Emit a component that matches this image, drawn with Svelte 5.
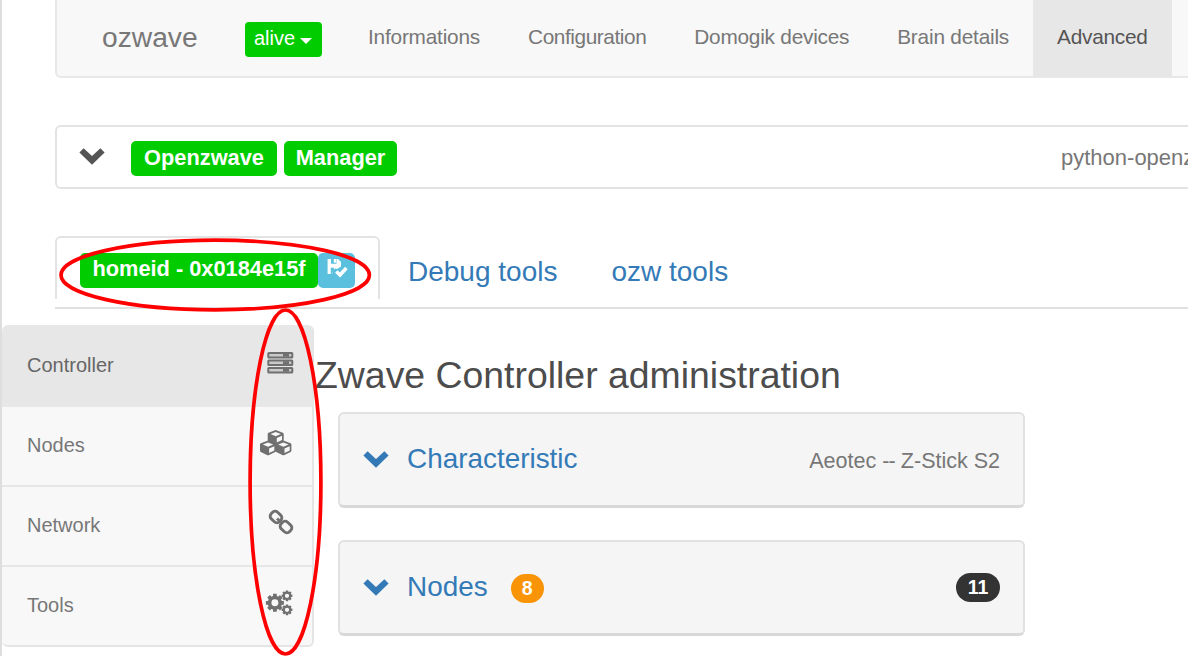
<script>
  const navItems = [
    { label: 'Informations', spacing: -0.2 },
    { label: 'Configuration', spacing: -0.42 },
    { label: 'Domogik devices', spacing: -0.23 },
    { label: 'Brain details', spacing: -0.2 },
    { label: 'Advanced', spacing: -0.25, active: true }
  ];
  const menu = ['Controller', 'Nodes', 'Network', 'Tools'];
  const teeth = [0, 45, 90, 135];
</script>

{#snippet chevron()}
  <svg class="chevron" viewBox="0 0 26 17" width="26" height="17">
    <path d="M4.6.2 13 8 21.4.2 25.6 4.4 13 16.8.4 4.4Z" fill="currentColor" />
  </svg>
{/snippet}

{#snippet gear(x, y, r, tooth, ring)}
  <g transform="translate({x} {y})" stroke="currentColor" fill="none">
    {#each teeth as angle}
      <path d="M0 {-r}V{-r * 0.6}M0 {r * 0.6}V{r}" stroke-width={tooth} transform="rotate({angle})" />
    {/each}
    <circle r={r * 0.59} stroke-width={ring} />
  </g>
{/snippet}

{#snippet cube(x, y)}
  <g transform="translate({x} {y})">
    <path d="M8 0 15.2 2.8Q16 3.2 16 4V10.3Q16 11.2 15.2 11.6L8.6 14.7Q8 15 7.4 14.7L.8 11.6Q0 11.2 0 10.3V4Q0 3.2.8 2.8Z" fill="currentColor" />
    <path d="M8 1.9 13.2 4 8 6.2 2.8 4Z" fill="#f8f8f8" />
    <path d="M9.1 8 14.3 5.8V10.1L9.1 12.6Z" fill="#f8f8f8" />
  </g>
{/snippet}

<div class="page">
  <nav class="navbar">
    <span class="brand">ozwave</span>
    <button class="alive">alive<i class="caret"></i></button>
    {#each navItems as item}
      <a class="nav-item" class:active={item.active} style="letter-spacing:{item.spacing}px">{item.label}</a>
    {/each}
  </nav>

  <section class="manager">
    {@render chevron()}
    <span class="label first">Openzwave</span>
    <span class="label second">Manager</span>
    <span class="version">python-openz</span>
  </section>

  <div class="tabs">
    <div class="tab current">
      <span class="label home">homeid - 0x0184e15f</span>
      <span class="save">
        <svg viewBox="0 0 24 20" width="24" height="20">
          <path d="M1.6 1H12L15 4V8.5L11 11 9 10.5 6.5 13.5V16H1.6Z" fill="#fff" />
          <path d="M5 1H10.5V5.8H5ZM4.8 9.8H8V12L6.5 14V16H4.8Z" fill="#5bc0de" />
          <path d="M7.8 1H10.2V4.6H7.8Z" fill="#fff" />
          <path d="M10.3 13.4 14 16.9 20.4 10" fill="none" stroke="#fff" stroke-width="3.5" />
        </svg>
      </span>
    </div>
    <a class="tab debug">Debug tools</a>
    <a class="tab ozw">ozw tools</a>
  </div>

  <div class="content">
    <aside>
      {#each menu as item, i}
        <a class="menu-item" class:selected={i === 0}>
          <span>{item}</span>
          <svg class="menu-icon" viewBox="0 0 34 30" width="34" height="30">
            {#if i === 0}
              {#each [5, 12.5, 20] as y}
                <rect x="8.3" {y} width="24" height="4.6" rx=".6" fill="#c9c9c9" stroke="currentColor" stroke-width="2" />
                <path d="M23 {y + 2.3}h6" stroke="currentColor" stroke-width="3" />
              {/each}
            {:else if i === 1}
              {@render cube(7.7, 2)}
              {@render cube(0, 12.5)}
              {@render cube(15.4, 12.5)}
            {:else if i === 2}
              <g fill="none" stroke="currentColor" stroke-width="2.9">
                <rect x="-5.8" y="-4.6" width="11.6" height="9.2" rx="3.7" transform="translate(16 9) rotate(43)" />
                <rect x="-5.8" y="-4.6" width="11.6" height="9.2" rx="3.7" transform="translate(26 19) rotate(43)" />
                <path d="m17 10.5 3.8 3.5" />
              </g>
            {:else}
              {@render gear(14.9, 14.8, 9, 3.8, 3.7)}
              {@render gear(27, 7.8, 5.4, 2.4, 2.1)}
              {@render gear(27, 21.8, 5.4, 2.4, 2.1)}
            {/if}
          </svg>
        </a>
      {/each}
    </aside>
    <main>
      <h1>Zwave Controller administration</h1>
      <section class="card">
        {@render chevron()}
        <span class="title">Characteristic</span>
        <span class="device">Aeotec <i class="dashes">--</i> Z-Stick S2</span>
      </section>
      <section class="card">
        {@render chevron()}
        <span class="title">Nodes</span>
        <span class="badge orange">8</span>
        <span class="badge dark">11</span>
      </section>
    </main>
  </div>

  <svg class="marks" viewBox="0 0 1188 656" width="1188" height="656">
    <g fill="none" stroke="#f00" stroke-width="3.7">
      <ellipse cx="215.2" cy="275" rx="154.2" ry="34.8" />
      <ellipse cx="285.5" cy="482" rx="35.4" ry="172" />
    </g>
  </svg>
</div>

<style>
  :global(body) { margin: 0; overflow: hidden; }
  .page {
    position: relative; box-sizing: border-box; width: 1188px; height: 656px; overflow: hidden;
    border-left: 2px solid #dedede; background: #fff; color: #777;
    font-family: "Liberation Sans", Arial, sans-serif;
  }
  .page * { box-sizing: border-box; }
  svg { display: block; flex: none; }
  span, a { white-space: nowrap; }
  .navbar {
    display: flex; height: 78px; margin-left: 53px; background: #f8f8f8;
    border: solid #e8e8e8; border-width: 0 0 2px 2px; border-radius: 0 0 0 6px;
  }
  .brand { width: 188px; padding-left: 45px; font-size: 28.2px; line-height: 74px; }
  .alive {
    display: flex; align-items: center; width: 77px; height: 35px; margin: 21.5px 22px 0 0; padding: 0 0 2px 9px;
    background: #0c0; border: 0; border-radius: 4px; color: #fff; font: 20px "Liberation Sans", Arial, sans-serif;
  }
  .caret { margin: 5px 0 0 5px; border: solid transparent; border-width: 6px 6px 0; border-top-color: #fff; }
  .nav-item { flex: none; padding: 0 24px; font-size: 20.8px; line-height: 74px; }
  .nav-item.active { background: #e7e7e7; color: #555; }
  .manager {
    display: flex; align-items: center; height: 64px; margin: 47px 0 0 53px; padding: 2px 0 0 22px;
    border: 2px solid #e3e3e3; border-right: 0; border-radius: 6px 0 0 6px; color: #555;
  }
  .manager .chevron { margin-top: -3px; }
  .label {
    flex: none; height: 35px; border-radius: 5px; background: #0c0; color: #fff;
    font-size: 21.8px; font-weight: bold; line-height: 33px; text-align: center;
  }
  .first { width: 146px; margin-left: 26px; }
  .second { width: 113px; margin-left: 7px; }
  .version { margin-left: 664px; font-size: 22px; color: #777; }
  .tabs { display: flex; height: 73px; margin: 47px 0 0 53px; border-bottom: 2px solid #e0e0e0; color: #337ab7; font-size: 28px; }
  .tab { flex: none; line-height: 71px; }
  .current {
    display: flex; width: 325px; height: 63px; padding: 15px 0 0 23px;
    border: 2px solid #e3e3e3; border-bottom: 0; border-radius: 6px 6px 0 0;
  }
  .current .label { line-height: 32px; }
  .home { width: 238px; }
  .save { display: flex; align-items: center; justify-content: center; width: 37px; height: 35px; padding: 0 0 5px 2px; border-radius: 5px; background: #5bc0de; }
  .debug { margin-left: 28px; }
  .ozw { margin-left: 54px; }
  .content { display: flex; padding-top: 16px; }
  aside { flex: none; width: 312px; height: 322px; border: solid #e5e5e5; border-width: 0 2px 2px 0; border-radius: 6px; background: #f8f8f8; overflow: hidden; }
  .menu-item { display: flex; justify-content: space-between; height: 80px; padding: 21px 18px 0 25px; border-bottom: 2px solid #e7e7e7; font-size: 20px; line-height: 35px; }
  .menu-item:last-child { border-bottom: 0; }
  .menu-item.selected { height: 82px; background: #e7e7e7; color: #666; padding-top: 23px; }
  .menu-icon { color: #707070; }
  main { flex: none; width: 712px; padding-top: 29px; }
  h1 { margin: 0 0 15px 1px; font-size: 37.4px; font-weight: normal; line-height: 43px; color: #4c4c4c; white-space: nowrap; }
  .card {
    display: flex; align-items: center; height: 96px; margin: 0 1px 32px 24px; padding: 0 23px;
    background: #f5f5f5; border: 2px solid #e1e1e1; border-bottom: 3px solid #d8d8d8; border-radius: 6px; color: #337ab7;
  }
  .title { margin: 0 0 1px 18px; font-size: 27.9px; }
  .device { margin: 3px 0 0 auto; font-size: 21.5px; color: #777; }
  .dashes { font-style: normal; letter-spacing: -.8px; }
  .badge { height: 29px; border-radius: 15px; color: #fff; font-size: 19.5px; font-weight: bold; line-height: 28px; text-align: center; }
  .orange { width: 33px; margin-left: 23px; margin-top: 2px; background: #f89406; }
  .dark { width: 44px; margin-left: auto; margin-top: -1px; background: #333; }
  .marks { position: absolute; top: 0; left: -2px; pointer-events: none; }
</style>
